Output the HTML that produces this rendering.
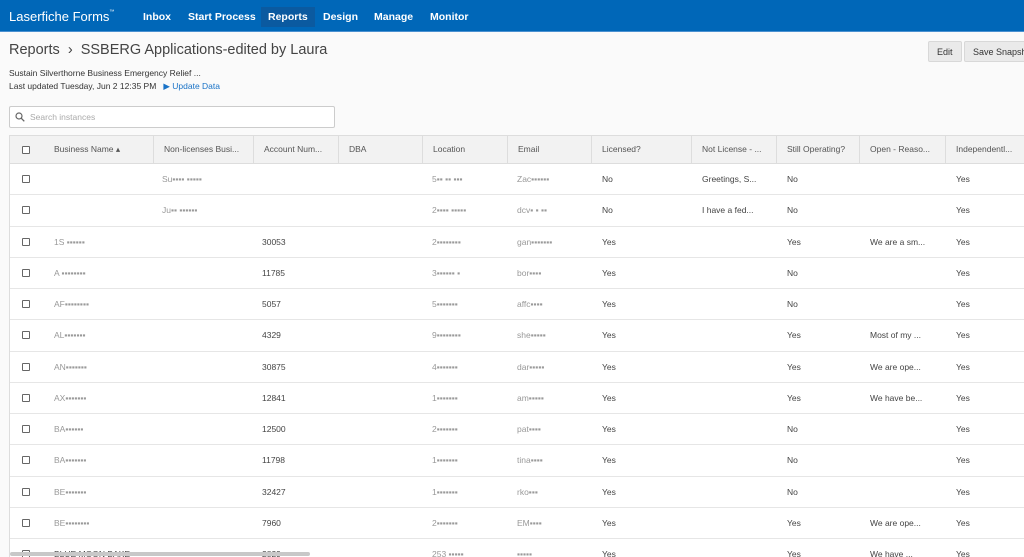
<!DOCTYPE html>
<html><head><meta charset="utf-8"><style>
*{box-sizing:border-box;margin:0;padding:0}
html,body{width:1024px;height:557px;overflow:hidden}
body{background:#fafafa;font-family:"Liberation Sans",sans-serif;color:#333;position:relative}
.nav{position:absolute;left:0;top:0;width:1024px;height:32px;background:#0067b8;border-bottom:1px solid #4a90d0}
.nav .logo{position:absolute;left:9px;top:9px;color:#fff;font-size:13px}
.nav .logo sup{font-size:5px;vertical-align:top}
.nav a{position:absolute;top:7px;height:20px;line-height:20px;color:#fff;font-size:10.5px;font-weight:bold;padding:0 7px}
.nav a.act{background:#0b5aa0}
.title{position:absolute;left:9px;top:42px;font-size:14.5px;color:#444}
.sub{position:absolute;left:9px;font-size:8.5px;color:#333}
.upd{color:#1a73c7}
.btn{position:absolute;top:41px;height:21px;line-height:21px;background:#eaeaea;border:1px solid #d8d8d8;border-radius:2px;font-size:9px;color:#333;padding:0 8px;white-space:nowrap}
.search{position:absolute;left:9px;top:106px;width:326px;height:22px;background:#fff;border:1px solid #ccc;border-radius:2px;font-size:8.5px;color:#aaa;line-height:20px;padding-left:20px}
.tbl{position:absolute;left:9px;top:135px;width:1030px;height:430px;background:#fff;border:1px solid #ddd;overflow:hidden}
.hdr{position:absolute;left:0;top:0;height:28px;width:100%;background:#f2f2f2;border-bottom:1px solid #ddd}
.hc{position:absolute;top:0;height:27px;line-height:27px;font-size:8.5px;color:#555;border-left:1px solid #ddd;padding-left:10px}
.row{position:absolute;left:0;width:100%;height:31.25px;border-bottom:1px solid #e6e6e6}
.c{position:absolute;top:0;line-height:31px;font-size:8.5px;color:#444;white-space:nowrap}
.cb{position:absolute;left:12px;width:8px;height:8px;border:1px solid #666;border-radius:1px;background:#fff}
.bl{color:#999}
.scroll{position:absolute;left:10px;top:552px;width:300px;height:4px;background:#c8c8c8;border-radius:2px}
</style></head><body>
<div class="nav"><div class="logo">Laserfiche Forms<sup>™</sup></div>
<a style="left:136px">Inbox</a><a style="left:181px">Start Process</a><a class="act" style="left:261px">Reports</a><a style="left:316px">Design</a><a style="left:367px">Manage</a><a style="left:423px">Monitor</a></div>
<div class="title">Reports &nbsp;›&nbsp; SSBERG Applications-edited by Laura</div>
<div class="sub" style="top:68px">Sustain Silverthorne Business Emergency Relief ...</div>
<div class="sub" style="top:81px">Last updated Tuesday, Jun 2 12:35 PM &nbsp;&nbsp;<span class="upd">▶ Update Data</span></div>
<div class="btn" style="left:928px">Edit</div>
<div class="btn" style="left:964px;width:80px">Save Snapshot</div>
<div class="search"><svg style="position:absolute;left:5px;top:5px" width="10" height="10" viewBox="0 0 10 10"><circle cx="4" cy="4" r="3" fill="none" stroke="#666" stroke-width="1.2"/><path d="M6.2 6.2L9.3 9.3" stroke="#666" stroke-width="1.3"/></svg>Search instances</div>
<div class="tbl">
<div class="hdr">
<div class="cb" style="top:10px"></div>
<div class="hc" style="left:36px;border:0;padding-left:8px">Business Name ▴</div>
<div class="hc" style="left:143px">Non-licenses Busi...</div>
<div class="hc" style="left:243px">Account Num...</div>
<div class="hc" style="left:328px">DBA</div>
<div class="hc" style="left:412px">Location</div>
<div class="hc" style="left:497px">Email</div>
<div class="hc" style="left:581px">Licensed?</div>
<div class="hc" style="left:681px">Not License - ...</div>
<div class="hc" style="left:766px">Still Operating?</div>
<div class="hc" style="left:849px">Open - Reaso...</div>
<div class="hc" style="left:935px">Independentl...</div>
</div>
<div id="rows"></div>
</div>
<div class="scroll"></div>
<script>
var d=[
["","Su▪▪▪▪ ▪▪▪▪▪","","5▪▪ ▪▪ ▪▪▪","Zac▪▪▪▪▪▪","No","Greetings, S...","No","","Yes"],
["","Ju▪▪ ▪▪▪▪▪▪","","2▪▪▪▪ ▪▪▪▪▪","dcv▪ ▪ ▪▪","No","I have a fed...","No","","Yes"],
["1S ▪▪▪▪▪▪","","30053","2▪▪▪▪▪▪▪▪","gan▪▪▪▪▪▪▪","Yes","","Yes","We are a sm...","Yes"],
["A ▪▪▪▪▪▪▪▪","","11785","3▪▪▪▪▪▪ ▪","bor▪▪▪▪","Yes","","No","","Yes"],
["AF▪▪▪▪▪▪▪▪","","5057","5▪▪▪▪▪▪▪","affc▪▪▪▪","Yes","","No","","Yes"],
["AL▪▪▪▪▪▪▪","","4329","9▪▪▪▪▪▪▪▪","she▪▪▪▪▪","Yes","","Yes","Most of my ...","Yes"],
["AN▪▪▪▪▪▪▪","","30875","4▪▪▪▪▪▪▪","dar▪▪▪▪▪","Yes","","Yes","We are ope...","Yes"],
["AX▪▪▪▪▪▪▪","","12841","1▪▪▪▪▪▪▪","am▪▪▪▪▪","Yes","","Yes","We have be...","Yes"],
["BA▪▪▪▪▪▪","","12500","2▪▪▪▪▪▪▪","pat▪▪▪▪","Yes","","No","","Yes"],
["BA▪▪▪▪▪▪▪","","11798","1▪▪▪▪▪▪▪","tina▪▪▪▪","Yes","","No","","Yes"],
["BE▪▪▪▪▪▪▪","","32427","1▪▪▪▪▪▪▪","rko▪▪▪","Yes","","No","","Yes"],
["BE▪▪▪▪▪▪▪▪","","7960","2▪▪▪▪▪▪▪","EM▪▪▪▪","Yes","","Yes","We are ope...","Yes"],
["BLUE MOON BAKE","","2829","253 ▪▪▪▪▪","▪▪▪▪▪","Yes","","Yes","We have ...","Yes"]];
var xs=[44,152,252,422,507,592,692,777,860,946];
var h='';
d.forEach(function(r,i){h+='<div class="row" style="top:'+(28+i*31.25)+'px"><div class="cb" style="top:11px"></div>';
r.forEach(function(v,j){if(v){var b=/▪/.test(v);h+='<div class="c'+(b?' bl':'')+'" style="left:'+xs[j]+'px">'+v+'</div>';}});h+='</div>';});
document.getElementById('rows').innerHTML=h;
</script>
</body></html>
